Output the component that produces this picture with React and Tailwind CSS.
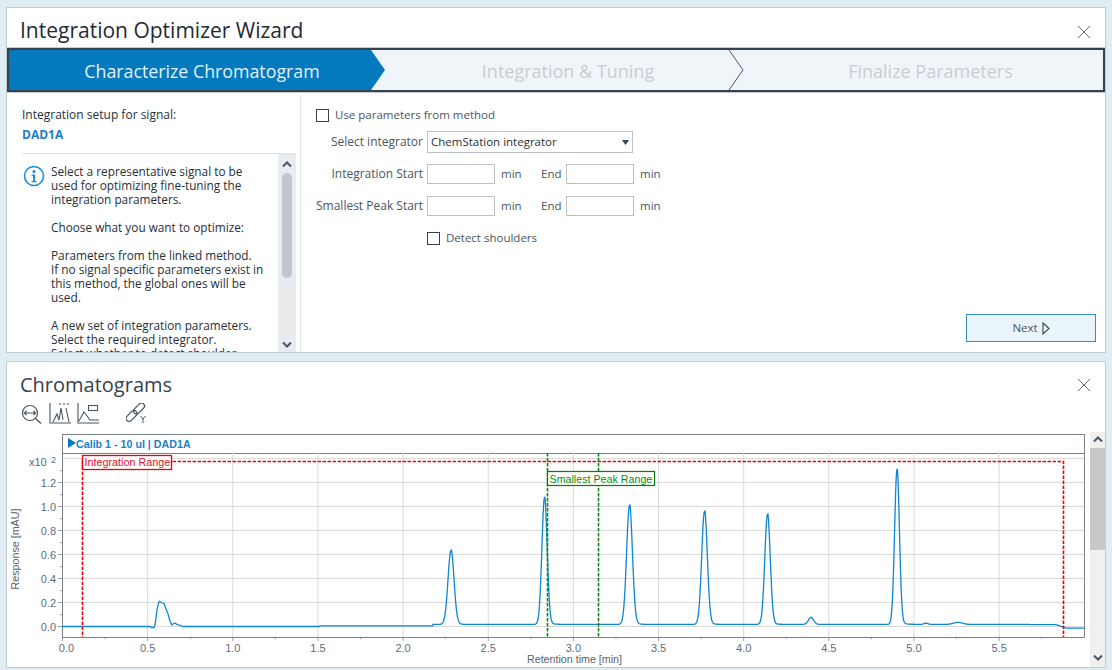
const blue = '#0379be';

// chromatogram trace, in page pixels
const peaks = [
	[451, 74, 3],
	[544.5, 127, 2.6],
	[629.5, 119, 2.9],
	[704.5, 113, 2.8],
	[767.5, 110, 2.7],
	[811, 7, 2.6],
	[897, 155, 2.4],
];

const firstBump = [
	[62, 626.5], [150, 626.5], [151, 627.5], [154, 627.5], [155, 625], [157, 610], [158.5, 603], [159.5, 601.5],
	[161, 602.5], [164, 603.5], [166, 609], [168, 614], [170, 621], [172, 625], [173, 624], [175, 623], [177, 624.5],
	[179, 625], [183, 626.5],
];

const baseline = (x) => {
	if (x < 320) return 626.5;
	if (x < 433) return 625.8;
	if (x < 1030) return 624.4;
	if (x < 1056) return 624.6;
	if (x < 1066) return 624.6 + ((x - 1056) / 10) * 3.4;
	return 628.2;
};

const tracePoints = () => {
	const pts = firstBump.map((p) => p.join(','));
	for (let x = 184; x <= 1084; x += 0.5) {
		let y = baseline(x);
		peaks.forEach(([c, h, s]) => {
			const d = x - c;
			y -= h * Math.exp(-(d * d) / (2 * s * s));
			if (d > 0) y -= h * 0.02 * Math.exp(-d / 5);
		});
		// low humps after the last peak
		y -= 1.2 * Math.exp(-((x - 926) ** 2) / 8);
		y -= 2 * Math.exp(-((x - 958) ** 2) / 40);
		pts.push(`${x},${y.toFixed(2)}`);
	}
	return pts.join(' ');
};

const xTicks = [0, 0.5, 1, 1.5, 2, 2.5, 3, 3.5, 4, 4.5, 5, 5.5];
const yTicks = [0, 0.2, 0.4, 0.6, 0.8, 1, 1.2];
const tx = (t) => 62.5 + t * 170.3;
const ty = (v) => 626.5 - v * 120;

const CloseIcon = () => (
	<svg width="14" height="14" viewBox="0 0 14 14" className="text-[#5f6b75]">
		<path d="M1 1l12 12M13 1L1 13" stroke="currentColor" strokeWidth="1" fill="none" />
	</svg>
);

const Chevron = ({ down }) => (
	<svg width="10" height="7" viewBox="0 0 10 7">
		<path d={down ? 'M1 1.5l4 4 4-4' : 'M1 5.5l4-4 4 4'} stroke="#4a5560" strokeWidth="2" fill="none" />
	</svg>
);

const Checkbox = () => <span className="block w-[13px] h-[13px] border border-[#36424e] bg-white shrink-0"></span>;

const TextBox = () => <span className="block w-[68px] h-[20px] border border-[#b9c1c6] bg-white shrink-0"></span>;

const RangeRow = ({ label, className }) => (
	<div className={`flex items-center h-[21px] ${className}`}>
		<span className="w-[111px] text-right pr-[4px] text-[12px] text-[#4a5560] whitespace-nowrap">{label}</span>
		<TextBox />
		<span className="ml-[6px] w-[40px] text-[#4a5560]">min</span>
		<span className="w-[25px] text-[#4a5560]">End</span>
		<TextBox />
		<span className="ml-[6px] text-[#4a5560]">min</span>
	</div>
);

const Toolbar = () => (
	<div className="flex items-center h-[22px] pl-[14px] mt-[6px]">
		<svg width="22" height="22" viewBox="0 0 22 22" fill="none" stroke="#4a5560" strokeWidth="1.2">
			<circle cx="9" cy="10" r="7.5" />
			<path d="M14.5 15.5l5.5 5" strokeWidth="1.4" />
			<path d="M3.5 10h11M5.5 8l-2 2 2 2M12.5 8l2 2-2 2" />
		</svg>
		<svg width="23" height="22" viewBox="0 0 23 22" fill="none" stroke="#4a5560" strokeWidth="1.1" className="ml-[6px]">
			<path d="M1 0v20h21" />
			<path d="M4 19l4-8 2 6 2-12 2 12M17 5l3 14" />
			<path d="M11 0v2M15 0v2M19 0v2" />
		</svg>
		<svg width="23" height="22" viewBox="0 0 23 22" fill="none" stroke="#4a5560" strokeWidth="1.1" className="ml-[5px]">
			<path d="M1 0v20h21" />
			<path d="M2 18l5-9 6 8h9" />
			<rect x="11.5" y="2.5" width="9" height="5" />
		</svg>
		<svg width="23" height="23" viewBox="0 0 23 23" fill="none" stroke="#4a5560" strokeWidth="1.3" className="ml-[26px]">
			<rect x="6.5" y="2.5" width="13" height="6" rx="3" transform="rotate(-45 13 5.5)" />
			<rect x="-1" y="10" width="13" height="6" rx="3" transform="rotate(-45 5.5 13)" />
			<path d="M14.5 13l2.5 3 2.5-3M17 16v4" strokeWidth="1" />
		</svg>
	</div>
);

const Plot = () => (
	<svg width="1082" height="235" viewBox="8 432 1082 235" className="block font-['Liberation_Sans',Arial,sans-serif]">
		{/* signal title strip */}
		<rect x="62.5" y="434.5" width="1022" height="19" fill="#fff" stroke="#7d818c" />
		<path d="M68 438v10l8-5z" fill={blue} />
		<text x="76" y="447.5" fontSize="10.7" fontWeight="700" fill="#1b7fc4">Calib 1 - 10 ul | DAD1A</text>

		{/* grid */}
		{xTicks.slice(1).map((t) => (
			<path key={t} d={`M${tx(t)} 453V637`} stroke="#d9d9d9" />
		))}
		{yTicks.concat(1.4).map((v) => (
			<path key={v} d={`M62 ${ty(v)}H1084`} stroke="#d9d9d9" />
		))}

		{/* ticks and labels */}
		{xTicks.map((t) => (
			<g key={t}>
				<path d={`M${tx(t)} 637v4M${tx(t + 0.25)} 637v2`} stroke="#9a9ea6" />
				<text x={t === 0 ? tx(t) + 4 : tx(t)} y="652" fontSize="11" textAnchor="middle" fill="#5f6b7c">{t.toFixed(1)}</text>
			</g>
		))}
		{yTicks.map((v) => (
			<g key={v}>
				<path d={`M58 ${ty(v)}h4M60 ${ty(v + 0.1)}h2`} stroke="#9a9ea6" />
				<text x="56" y={ty(v) + 4} fontSize="11" textAnchor="end" fill="#5f6b7c">{v.toFixed(1)}</text>
			</g>
		))}
		<text x="29" y="466" fontSize="11" fill="#5f6b7c">x10</text>
		<text x="51" y="463" fontSize="9" fill="#5f6b7c">2</text>
		<text x="0" y="0" fontSize="10.7" textAnchor="middle" fill="#5a5f6b" transform="translate(19 549) rotate(-90)">Response [mAU]</text>
		<text x="574.5" y="663" fontSize="10.7" textAnchor="middle" fill="#5a5f6b">Retention time [min]</text>

		{/* axis frame */}
		<path d="M62.5 453.5V637.5H1084.5V453.5" fill="none" stroke="#7d818c" />

		<polyline points={tracePoints()} fill="none" stroke="#0d86d3" strokeWidth="1.3" />

		{/* integration range */}
		<path d="M82.5 461.5H1063.5V637M82.5 461.5V637" fill="none" stroke="#f00000" strokeWidth="1.6" strokeDasharray="3.5 1.5" />
		<rect x="82.5" y="455.5" width="89" height="14" fill="#fff" stroke="#f00000" strokeWidth="1.3" />
		<text x="84.5" y="466" fontSize="10.8" fill="#e8112d">Integration Range</text>

		{/* smallest peak range */}
		<path d="M547.5 453V637M598.5 453V637" fill="none" stroke="#0a8a12" strokeWidth="1.6" strokeDasharray="3.5 1.5" />
		<rect x="547.5" y="471.5" width="107" height="14" fill="#fff" stroke="#0a7a12" strokeWidth="1.2" />
		<text x="549.5" y="482.5" fontSize="10.7" fill="#0a8a12">Smallest Peak Range</text>
	</svg>
);

export default function App() {
	return (
		<div className="w-[1112px] h-[670px] overflow-hidden bg-[#e1edf5] pt-[7px] px-[6px] flex flex-col gap-[8px] font-['Open_Sans',sans-serif] text-[11.5px] text-[#26303a]">
			{/* wizard panel */}
			<div className="h-[346px] bg-white border border-[#c3ccd2] flex flex-col shrink-0">
				<div className="h-[40px] flex items-center justify-between pl-[13px] pr-[14px] shrink-0">
					<h1 className="text-[21px] text-[#1f2a35] mt-[6px]">Integration Optimizer Wizard</h1>
					<div className="mt-[8px]"><CloseIcon /></div>
				</div>
				<div className="h-[44px] flex border-2 border-[#36424e] bg-[#f0f5fa] shrink-0 text-[18px] outline outline-1 outline-[#c3ccd2]">
					<div className="w-[376px] pl-[10px] pt-[2px] flex items-center justify-center bg-[#0379be] text-[#e6f1f8] text-[17.8px] [clip-path:polygon(0_0,362px_0,100%_50%,362px_100%,0_100%)]">
						Characterize Chromatogram
					</div>
					<div className="relative w-[359px] pl-[7px] pt-[2px] flex items-center justify-center text-[#c9cdd0]">
						Integration &amp; Tuning
						<svg width="16" height="40" viewBox="0 0 16 40" className="absolute right-0 top-0">
							<path d="M1 0l14 20L1 40" stroke="#4a5560" fill="none" />
						</svg>
					</div>
					<div className="flex-1 pl-[14px] pt-[2px] flex items-center justify-center text-[#c9cdd0]">Finalize Parameters</div>
				</div>
				<div className="flex flex-1 min-h-0">
					<div className="w-[294px] pl-[15px] pr-[4px] pt-[12px] border-r border-[#e3e6e8] mt-[3px] flex flex-col min-h-0 shrink-0">
						<div className="leading-[16px] text-[12px]">Integration setup for signal:</div>
						<div className="mt-[4px] font-bold text-[#1b7fc4] text-[12px] leading-[16px]">DAD1A</div>
						<div className="mt-[10px] border-t border-[#dfe3e6] flex flex-1 min-h-0">
							<div className="flex-1 flex pt-[10px] min-h-0 overflow-hidden">
								<svg width="22" height="22" viewBox="0 0 22 22" className="ml-[1px] mt-[1px] shrink-0">
									<circle cx="11" cy="11" r="9.5" fill="none" stroke="#1b8fd6" strokeWidth="1.6" />
									<circle cx="11" cy="6.5" r="1.6" fill="#1b8fd6" />
									<path d="M8.5 9.5h3.5v6.5h1.5v1.2H8.5V16H10v-5.3H8.5z" fill="#1b8fd6" />
								</svg>
								<div className="ml-[6px] leading-[14px] text-[11.8px] whitespace-nowrap">
									Select a representative signal to be<br />
									used for optimizing fine-tuning the<br />
									integration parameters.<br />
									<br />
									Choose what you want to optimize:<br />
									<br />
									Parameters from the linked method.<br />
									If no signal specific parameters exist in<br />
									this method, the global ones will be<br />
									used.<br />
									<br />
									A new set of integration parameters.<br />
									Select the required integrator.<br />
									Select whether to detect shoulder
								</div>
							</div>
							<div className="w-[18px] bg-[#e8ecef] flex flex-col items-center shrink-0 pt-[7px] pb-[4px]">
								<Chevron />
								<div className="w-[10px] h-[105px] mt-[5px] rounded-[5px] bg-[#c1c6ca]"></div>
								<div className="flex-1"></div>
								<Chevron down />
							</div>
						</div>
					</div>
					<div className="flex-1 pl-[15px] pr-[8px] pt-[16px] flex flex-col">
						<div className="flex items-center gap-[6px] h-[14px] text-[#4a5560]">
							<Checkbox />
							Use parameters from method
						</div>
						<div className="flex items-center h-[22px] mt-[9px]">
							<span className="w-[111px] text-right pr-[4px] text-[12px] text-[#4a5560]">Select integrator</span>
							<div className="w-[206px] h-[22px] border border-[#b9c1c6] flex items-center justify-between px-[3px]">
								<span>ChemStation integrator</span>
								<svg width="7" height="5" viewBox="0 0 7 5"><path d="M0 0h7L3.5 5z" fill="#36424e" /></svg>
							</div>
						</div>
						<RangeRow label="Integration Start" className="mt-[10px]" />
						<RangeRow label="Smallest Peak Start" className="mt-[11px]" />
						<div className="flex items-center gap-[6px] h-[14px] mt-[15px] ml-[111px] text-[#4a5560]">
							<Checkbox />
							Detect shoulders
						</div>
						<div className="flex-1"></div>
						<div className="self-end mb-[10px] mr-[1px] w-[130px] h-[28px] border border-[#3b8cc2] bg-[#eaf4fb] flex items-center justify-center gap-[4px] text-[#4a5560]">
							Next
							<svg width="8" height="13" viewBox="0 0 8 13"><path d="M1 1l6 5.5L1 12z" fill="none" stroke="#36424e" strokeWidth="1.1" /></svg>
						</div>
					</div>
				</div>
			</div>

			{/* chromatogram panel */}
			<div className="h-[307px] bg-white border border-[#c3ccd2] flex flex-col shrink-0">
				<div className="h-[35px] flex items-center justify-between pl-[13px] pr-[14px] shrink-0">
					<h2 className="text-[20px] text-[#36424e] mt-[11px]">Chromatograms</h2>
					<div className="mt-[11px]"><CloseIcon /></div>
				</div>
				<Toolbar />
				<div className="flex mt-[7px] pl-[1px]">
					<Plot />
					<div className="w-[15px] h-[235px] bg-[#f0f0f0] flex flex-col items-center pt-[4px] pb-[6px]">
						<Chevron />
						<div className="w-full h-[102px] mt-[5px] bg-[#c8c8c8]"></div>
						<div className="flex-1"></div>
						<Chevron down />
					</div>
				</div>
			</div>
		</div>
	);
}
